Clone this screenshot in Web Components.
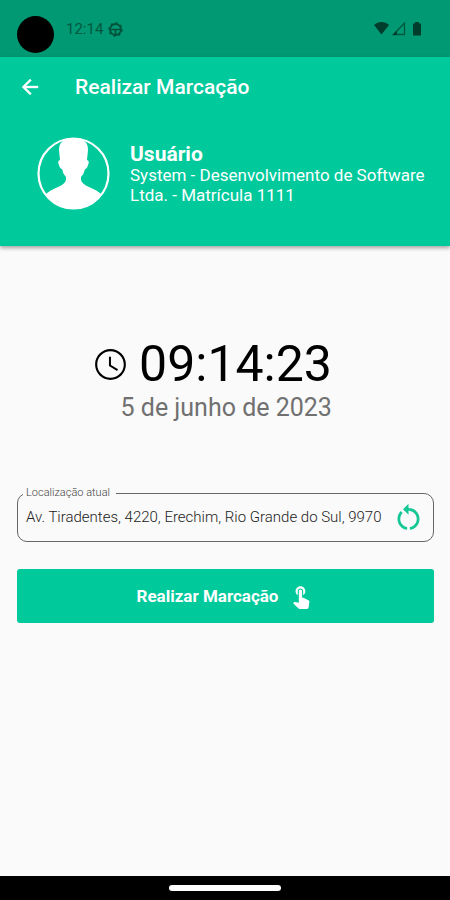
<!DOCTYPE html>
<html lang="pt-BR">
<head>
<meta charset="utf-8">
<meta name="viewport" content="width=device-width, initial-scale=1">
<title>Realizar Marcação</title>
<style>
  :root { --brand: #00c99c; --brand-dark: #009973; --ink: #000; --page: #fafafa; }
  body { margin: 0; background: var(--page); font-family: Roboto, "Liberation Sans", sans-serif; }
</style>
</head>
<body>
<punch-screen>
  <status-bar slot="top" time="12:14"></status-bar>
  <app-header slot="top" heading="Realizar Marcação">
    <user-card name="Usuário">System - Desenvolvimento de Software Ltda. - Matrícula 1111</user-card>
  </app-header>
  <punch-clock time="09:14:23">5 de junho de 2023</punch-clock>
  <location-field label="Localização atual" value="Av. Tiradentes, 4220, Erechim, Rio Grande do Sul, 9970"></location-field>
  <punch-button>Realizar Marcação</punch-button>
  <nav-bar slot="bottom"></nav-bar>
</punch-screen>

<script>
const define = (name, render) => customElements.define(name, class extends HTMLElement {
  connectedCallback() {
    if (this.shadowRoot) return;
    const root = this.attachShadow({ mode: "open" });
    root.innerHTML = "<style>*{box-sizing:border-box}svg{display:block;flex:none}</style>" + render(this);
  }
});

define("punch-screen", () => `
  <style>
    :host { display: flex; flex-direction: column; min-height: 100vh; }
    main { flex: 1; padding: 90px 16px 24px 17px; }
  </style>
  <slot name="top"></slot>
  <main><slot></slot></main>
  <slot name="bottom"></slot>`);

define("status-bar", el => `
  <style>
    :host { display: flex; align-items: flex-start; height: 57px; padding: 16px 26px 0 17px;
            box-sizing: border-box; background: var(--brand-dark); color: #00583f; }
    .camera { width: 37px; height: 37px; border-radius: 50%; background: #000; }
    .time { margin: 4px 5px 0 12px; font-size: 15px; line-height: 18px; }
    .wheel { margin-top: 6px; }
    .signals { display: flex; gap: 3px; margin: 6px 0 0 auto; color: #003d2d; }
  </style>
  <div class="camera"></div>
  <span class="time">${el.getAttribute("time")}</span>
  <svg class="wheel" width="15" height="15" viewBox="0 0 15 15" fill="none" stroke="#00503a">
    <circle cx="7.500" cy="7.500" r="5.500" stroke-width="1.800"/>
    <circle cx="7.500" cy="7.500" r="6.700" stroke-width="1.300" stroke-dasharray="2 3.260"/>
    <path d="M2.500 7.500h10M7.500 8v4.500" stroke-width="1.700"/>
  </svg>
  <div class="signals">
    <svg width="15" height="14" viewBox="0 0 15 14"><path fill="currentColor" d="M0 3C4-1 11-1 15 3L7.500 12.500z"/></svg>
    <svg width="15" height="14" viewBox="0 0 15 14"><path d="M1.500 12.500L12.500 1v11.500z" fill="none" stroke="#00583f" stroke-width="1.300"/><path fill="currentColor" d="M0.500 13L5 8.500V13z"/></svg>
    <svg width="14" height="14" viewBox="0 0 14 14"><path fill="currentColor" d="M5 0h4v1.500h1.500q.5 0 .5.500v11q0 .5-.5.500h-7q-.5 0-.5-.5V2q0-.5.5-.5H5z"/></svg>
  </div>`);

define("app-header", el => `
  <style>
    :host { display: block; background: var(--brand); color: #fff; padding-bottom: 36px;
            box-shadow: 0 2px 4px rgba(0,0,0,.35); }
    header { display: flex; align-items: center; gap: 33px; height: 60px; padding-left: 18px; }
    button { padding: 0; border: 0; background: none; color: inherit; cursor: pointer; }
    h1 { margin: 0; font-size: 21px; line-height: 24px; font-weight: 500; }
  </style>
  <header>
    <button type="button" aria-label="Voltar">
      <svg width="24" height="24" viewBox="0 0 24 24" fill="currentColor" stroke="currentColor" stroke-width=".4"><path d="M20 11H7.830l5.590-5.590L12 4l-8 8 8 8 1.410-1.410L7.830 13H20z"/></svg>
    </button>
    <h1>${el.getAttribute("heading")}</h1>
  </header>
  <slot></slot>`);

define("user-card", el => `
  <style>
    :host { display: flex; align-items: center; gap: 20px; padding: 20px 24px 0 37px; }
    h2 { margin: 0; font-size: 21px; line-height: 22px; font-weight: 700; }
    p { margin: 0; font-size: 17px; line-height: 20px; }
  </style>
  <svg width="73" height="73" viewBox="0 0 73 73">
    <defs><clipPath id="disc"><circle cx="36.500" cy="36.500" r="35.500"/></clipPath></defs>
    <g clip-path="url(#disc)" fill="#fff">
      <path d="M23 23L22 13Q22 7 25 5Q28 1 36 1Q44 1 47 4Q51 6 51 13L50 23Q53 24 51 28Q50 32 48 32Q47 37 44 40V43Q45 47 52 50Q60 53 65 58V73H8V58Q13 53 21 50Q28 47 29 43V40Q26 37 25 32Q23 32 22 28Q20 24 23 23z"/>
    </g>
    <circle cx="36.500" cy="36.500" r="35" fill="none" stroke="#fff" stroke-width="2.200"/>
  </svg>
  <div><h2>${el.getAttribute("name")}</h2><p><slot></slot></p></div>`);

define("punch-clock", el => `
  <style>
    :host { display: flex; justify-content: center; margin-bottom: 63px; padding-right: 27px; }
    .stack { display: flex; flex-direction: column; align-items: flex-end; }
    .row { display: flex; align-items: center; gap: 10px; }
    time { font-size: 50px; line-height: 56px; color: var(--ink); }
    p { margin: 0; font-size: 25px; line-height: 32px; color: #707070; }
  </style>
  <div class="stack">
    <div class="row">
      <svg width="37" height="37" viewBox="0 0 24 24"><path d="M11.990 2C6.470 2 2 6.480 2 12s4.470 10 9.990 10C17.520 22 22 17.520 22 12S17.520 2 11.990 2zM12 20.600c-4.750 0-8.600-3.850-8.600-8.600s3.850-8.600 8.600-8.600 8.600 3.850 8.600 8.600-3.850 8.600-8.600 8.600zm.3-13.600H11v6l5.250 3.150.65-1.100-4.600-2.700z"/></svg>
      <time>${el.getAttribute("time")}</time>
    </div>
    <p><slot></slot></p>
  </div>`);

define("location-field", el => `
  <style>
    :host { display: block; margin-bottom: 27px; }
    fieldset { display: flex; align-items: center; min-width: 0; margin: 0; padding: 0 8px 6px;
               border: 1px solid #666; border-radius: 10px; }
    legend { margin-left: -3px; padding: 0 6px 0 3px; font-size: 11px; line-height: 12px; font-weight: 300; color: #444; }
    label { display: block; }
    input { flex: 1; min-width: 0; height: 36px; padding: 0; border: 0; outline: 0; background: none;
            font: 300 15px/20px Roboto, "Liberation Sans", sans-serif; color: #222; }
    button { padding: 0; border: 0; background: none; color: #14c795; cursor: pointer; }
  </style>
  <fieldset>
    <legend><label for="place">${el.getAttribute("label")}</label></legend>
    <input id="place" type="text" readonly value="${el.getAttribute("value")}">
    <button type="button" aria-label="Atualizar localização">
      <svg width="33" height="33" viewBox="0 0 24 24" fill="currentColor"><path d="M12 5V2L8 6l4 4V7c3.310 0 6 2.690 6 6 0 2.970-2.170 5.430-5 5.910v2.020c3.950-.49 7-3.850 7-7.930 0-4.420-3.580-8-8-8zM6 13c0-1.650.67-3.150 1.760-4.240L6.340 7.340C4.900 8.790 4 10.790 4 13c0 4.080 3.050 7.440 7 7.930v-2.020c-2.830-.48-5-2.940-5-5.910z"/></svg>
    </button>
  </fieldset>`);

define("punch-button", () => `
  <style>
    :host { display: block; }
    button { display: flex; align-items: center; justify-content: center; gap: 10px; width: 100%; height: 54px;
             padding: 0; border: 0; border-radius: 3px; background: var(--brand); color: #fff; cursor: pointer;
             font: 700 17px/20px Roboto, "Liberation Sans", sans-serif; }
  </style>
  <button type="button"><slot></slot>
    <svg width="26" height="26" viewBox="0 0 24 24" fill="currentColor"><path d="M9 11.240V7.500C9 6.120 10.120 5 11.500 5S14 6.120 14 7.500v3.740c1.210-.81 2-2.180 2-3.740C16 5.010 13.990 3 11.500 3S7 5.010 7 7.500c0 1.560.79 2.930 2 3.740zm9.840 4.630l-4.540-2.260c-.17-.07-.35-.11-.54-.11H13v-6c0-.83-.67-1.500-1.500-1.500S10 6.670 10 7.500v10.740l-3.430-.72c-.08-.01-.15-.03-.24-.03-.31 0-.59.13-.79.33l-.79.8 4.940 4.940c.27.27.65.44 1.060.44h6.790c.75 0 1.330-.55 1.440-1.280l.75-5.270c.01-.07.02-.14.02-.2 0-.62-.38-1.160-.91-1.380z"/></svg>
  </button>`);

define("nav-bar", () => `
  <style>
    :host { display: flex; align-items: center; justify-content: center; height: 24px; background: #000; }
    div { width: 25%; height: 6px; border-radius: 3px; background: #fff; }
  </style>
  <div></div>`);
</script>
</body>
</html>
